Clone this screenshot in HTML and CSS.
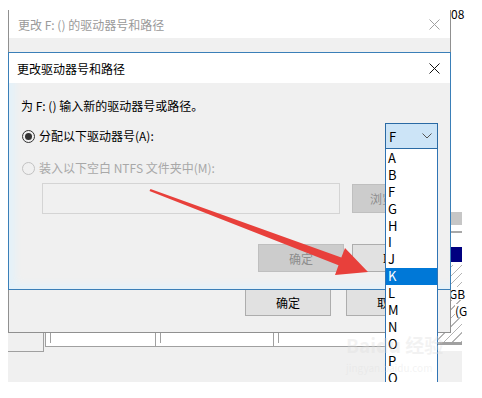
FILE: index.html
```html
<!DOCTYPE html>
<html lang="zh-CN">
<head>
  <meta charset="UTF-8">
  <meta name="viewport" content="width=device-width, initial-scale=1.0">
  <title>更改驱动器号和路径</title>
  <link rel="stylesheet" href="styles.css">
</head>
<body>
  <div class="screen">

    <!-- 背景里的磁盘管理窗口 -->
    <div class="disk-bottom">
      <div class="volume-list">
        <div class="vl-stub"></div>
        <div class="vl-row">
          <div class="vl-col" style="width: 110px"></div>
          <div class="vl-col" style="width: 118px"></div>
          <div class="vl-col vl-last"></div>
        </div>
      </div>
    </div>

    <div class="disk-strip">
      <div class="seg-white"><span class="strip-num">08</span></div>
      <div class="seg-block"></div>
      <div class="seg-gap6"></div>
      <div class="seg-line"></div>
      <div class="seg-gap14"></div>
      <div class="seg-navy"></div>
      <div class="seg-gap3"></div>
      <div class="seg-hatch">
        <span class="hatch-size">GB</span>
        <span class="hatch-letter">(G</span>
      </div>
      <div class="seg-bar"></div>
    </div>

    <!-- 外层对话框 -->
    <div class="window outer">
      <div class="titlebar">
        <span class="title">更改 F: () 的驱动器号和路径</span>
        <svg class="close" width="11" height="11" viewBox="0 0 11 11">
          <path d="M0.5 0.5 L10.5 10.5 M10.5 0.5 L0.5 10.5" stroke="#a0a0a0" stroke-width="1" fill="none"/>
        </svg>
      </div>
      <div class="outer-body">
        <div class="outer-actions">
          <button class="btn">确定</button>
          <button class="btn">取消</button>
        </div>
      </div>
    </div>

    <!-- 当前对话框 -->
    <div class="window inner">
      <div class="titlebar">
        <span class="title">更改驱动器号和路径</span>
        <svg class="close" width="11" height="11" viewBox="0 0 11 11">
          <path d="M0.5 0.5 L10.5 10.5 M10.5 0.5 L0.5 10.5" stroke="#111" stroke-width="1" fill="none"/>
        </svg>
      </div>
      <div class="inner-body">
        <p class="prompt">为 F: () 输入新的驱动器号或路径。</p>

        <div class="drive-row">
          <span class="radio checked"></span>
          <span class="label">分配以下驱动器号(A):</span>

          <div class="combo">
            <span class="combo-value">F</span>
            <svg class="chevron" width="10" height="6" viewBox="0 0 10 6">
              <polyline points="0.5,0.5 5,5 9.5,0.5" stroke="#555" stroke-width="1" fill="none"/>
            </svg>
            <ul class="combo-list">
              <li>A</li>
              <li>B</li>
              <li>F</li>
              <li>G</li>
              <li>H</li>
              <li>I</li>
              <li>J</li>
              <li class="selected">K</li>
              <li>L</li>
              <li>M</li>
              <li>N</li>
              <li>O</li>
              <li>P</li>
              <li>Q</li>
            </ul>
          </div>
        </div>

        <div class="mount-row">
          <span class="radio disabled"></span>
          <span class="label muted">装入以下空白 NTFS 文件夹中(M):</span>
        </div>

        <div class="path-row">
          <div class="path-box"></div>
          <button class="btn disabled browse">浏览(B)...</button>
        </div>

        <div class="actions">
          <button class="btn disabled">确定</button>
          <button class="btn">取消</button>
        </div>
      </div>
    </div>

    <!-- 水印 -->
    <div class="watermark">
      <span class="wm-logo">Bai<b>du</b> 经验</span>
      <span class="wm-url">jingyan.baidu.com</span>
    </div>

    <!-- 红色箭头 -->
    <svg class="arrow" width="482" height="382" viewBox="0 0 482 382">
      <polygon points="150.5,189 341.3,257.6 345,248 368,272 335,275 338.5,265.2 149.5,191" fill="#e8403b"/>
    </svg>
  </div>
</body>
</html>
```

FILE: styles.css
```css
* {
  margin: 0;
  padding: 0;
  box-sizing: border-box;
}

body {
  background-color: #fff;
  font-family: "Noto Sans CJK SC", sans-serif;
  font-size: 12px;
  color: #000;
}

.screen {
  position: relative;
  width: 482px;
  height: 382px;
  overflow: hidden;
}

/* 背景窗口 */
.disk-bottom {
  position: absolute;
  left: 8px;
  top: 332px;
  width: 454px;
  height: 50px;
  background-color: #f0f0f0;
}

.volume-list {
  display: flex;
  width: 429px;
}

.vl-stub {
  width: 36px;
  height: 20px;
  border-right: 1px solid #a0a0a0;
  border-bottom: 1px solid #a0a0a0;
}

.vl-row {
  flex: 1;
  display: flex;
  height: 15px;
  margin-left: 1px;
  background-color: #fff;
  border-bottom: 1px solid #a0a0a0;
}

.vl-col {
  position: relative;
  height: 14px;
  border-left: 1px solid #a0a0a0;
}

.vl-col::before {
  content: "";
  position: absolute;
  left: 4px;
  top: 0;
  width: 1px;
  height: 11px;
  background-color: #a0a0a0;
}

.vl-last {
  flex: 1;
}

.disk-strip {
  position: absolute;
  left: 437px;
  top: 0;
  width: 25px;
  height: 351px;
  display: flex;
  flex-direction: column;
  background-color: #fff;
}

.seg-white {
  height: 212px;
  padding: 8px 0 0 14px;
  font-size: 12px;
  line-height: 11px;
}

.seg-block {
  height: 13px;
  background-color: #c6c6c6;
}

.seg-gap6 { height: 6px; }
.seg-gap14 { height: 14px; }
.seg-gap3 { height: 3px; }

.seg-line {
  height: 2px;
  background-color: #a8a8a8;
}

.seg-navy {
  height: 15px;
  background-color: #000080;
}

.seg-hatch {
  position: relative;
  height: 77px;
  background: repeating-linear-gradient(135deg, #fff 0 5px, #b4b4b4 5px 6px);
}

.hatch-size,
.hatch-letter {
  position: absolute;
  font-size: 12px;
  line-height: 13px;
  background-color: #fff;
}

.hatch-size {
  left: 12px;
  top: 22px;
}

.hatch-letter {
  left: 18px;
  top: 39px;
}

.seg-bar {
  height: 3px;
  background-color: #a0a0a0;
}

/* 窗口 */
.window {
  position: absolute;
  left: 8px;
  width: 443px;
  display: flex;
  flex-direction: column;
  background-color: #f0f0f0;
}

.titlebar {
  display: flex;
  align-items: center;
  justify-content: space-between;
  background-color: #fff;
  padding: 0 10px 0 9px;
}

.outer {
  top: 10px;
  height: 323px;
  border: 1px solid #909090;
  border-top: none;
}

.outer .titlebar {
  height: 28px;
}

.outer .title {
  color: #9a9a9a;
}

.outer-body {
  flex: 1;
  display: flex;
  flex-direction: column;
  justify-content: flex-end;
  padding: 0 18px 16px 0;
}

.outer-actions {
  display: flex;
  justify-content: flex-end;
  gap: 15px;
}

.outer-actions .btn {
  width: 86px;
  height: 27px;
}

.inner {
  top: 52px;
  height: 238px;
  border: 1px solid #3a7fb8;
}

.inner .titlebar {
  height: 30px;
  padding-left: 8px;
}

.inner-body {
  flex: 1;
  padding: 15px 12px 0;
  box-shadow: inset 9px -8px 7px -3px #e4f1f9;
}

.prompt {
  line-height: 16px;
}

.drive-row {
  display: flex;
  align-items: center;
  margin-top: 9px;
  height: 26px;
}

.mount-row {
  display: flex;
  align-items: center;
  margin-top: 11px;
  height: 16px;
}

.radio {
  width: 13px;
  height: 13px;
  margin-left: 1px;
  border-radius: 50%;
  border: 1px solid #333;
  display: flex;
  align-items: center;
  justify-content: center;
}

.radio.checked::after {
  content: "";
  width: 7px;
  height: 7px;
  border-radius: 50%;
  background-color: #333;
}

.radio.disabled {
  border-color: #c2c2c2;
}

.label {
  margin-left: 4px;
  line-height: 16px;
}

.muted {
  color: #a8a8a8;
}

/* 下拉框 */
.combo {
  position: relative;
  margin-left: auto;
  width: 53px;
  height: 26px;
  display: flex;
  align-items: center;
  justify-content: space-between;
  padding: 0 5px 0 3px;
  background-color: #cce4f7;
  border: 1px solid #2a6aa4;
  font-size: 13px;
}

.combo-list {
  position: absolute;
  left: -1px;
  top: 25px;
  width: 53px;
  height: 240px;
  list-style: none;
  padding-top: 1px;
  background-color: #fff;
  border-left: 1px solid #2f74b5;
  border-right: 1px solid #2f74b5;
  z-index: 2;
}

.combo-list li {
  height: 16.9px;
  line-height: 16.9px;
  padding-left: 2px;
  font-size: 13px;
}

.combo-list li.selected {
  background-color: #0078d7;
  color: #fff;
}

.path-row {
  display: flex;
  align-items: center;
  margin-top: 7px;
  height: 31px;
}

.path-box {
  margin-left: 21px;
  width: 298px;
  height: 31px;
  border: 1px solid #d4d4d4;
  background-color: #f0f0f0;
}

.btn {
  font-family: inherit;
  font-size: 12px;
  color: #000;
  background-color: #e1e1e1;
  border: 1px solid #adadad;
}

.btn.disabled {
  background-color: #cccccc;
  border-color: #bfbfbf;
  color: #8d8d8d;
}

.browse {
  margin-left: auto;
  width: 86px;
  height: 29px;
}

.actions {
  display: flex;
  justify-content: flex-end;
  gap: 8px;
  margin-top: 30px;
}

.actions .btn {
  width: 86px;
  height: 28px;
}

/* 水印 */
.watermark {
  position: absolute;
  left: 346px;
  top: 334px;
  display: flex;
  flex-direction: column;
  z-index: 3;
  color: rgba(220, 220, 220, 0.35);
  pointer-events: none;
}

.wm-logo {
  font-size: 19px;
  line-height: 22px;
  font-weight: bold;
}

.wm-url {
  font-size: 10px;
  line-height: 12px;
  margin-top: 6px;
}

.arrow {
  position: absolute;
  left: 0;
  top: 0;
  z-index: 4;
  pointer-events: none;
}
```
